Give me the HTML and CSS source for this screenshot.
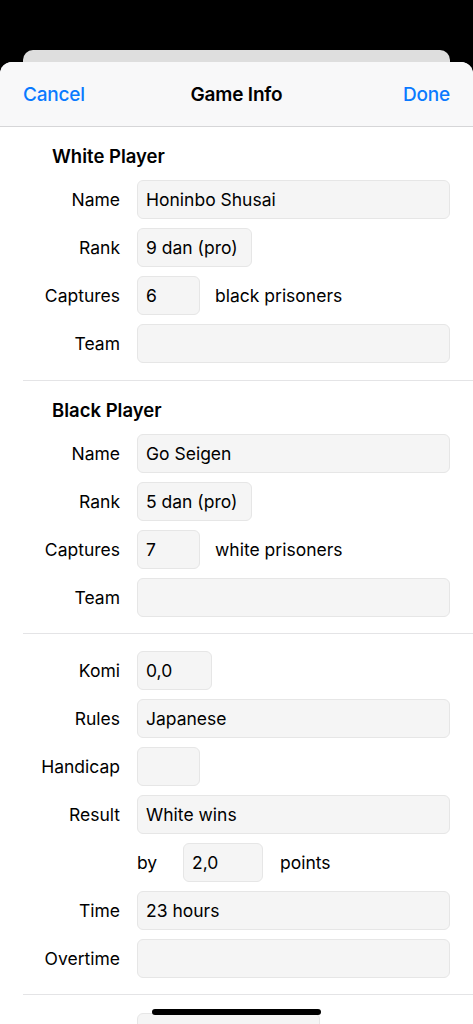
FILE: index.html
```html
<!DOCTYPE html>
<html>
<head>
<meta charset="utf-8">
<link rel="stylesheet" href="styles.css">
</head>
<body>
<div class="screen">
  <div class="backcard"></div>
  <div class="sheet">
    <header class="navbar">
      <span class="nav-btn">Cancel</span>
      <span class="nav-title">Game Info</span>
      <span class="nav-btn done">Done</span>
    </header>
    <main class="content">
      <section class="section first">
        <h2 class="section-title">White Player</h2>
        <div class="form">
          <label class="lbl">Name</label><div class="row"><div class="field wide">Honinbo Shusai</div></div>
          <label class="lbl">Rank</label><div class="row"><div class="field rank">9 dan (pro)</div></div>
          <label class="lbl">Captures</label><div class="row"><div class="field small">6</div><span class="suffix">black prisoners</span></div>
          <label class="lbl">Team</label><div class="row"><div class="field wide"></div></div>
        </div>
      </section>
      <section class="section">
        <h2 class="section-title">Black Player</h2>
        <div class="form">
          <label class="lbl">Name</label><div class="row"><div class="field wide">Go Seigen</div></div>
          <label class="lbl">Rank</label><div class="row"><div class="field rank">5 dan (pro)</div></div>
          <label class="lbl">Captures</label><div class="row"><div class="field small">7</div><span class="suffix">white prisoners</span></div>
          <label class="lbl">Team</label><div class="row"><div class="field wide"></div></div>
        </div>
      </section>
      <section class="section game">
        <div class="form">
          <label class="lbl">Komi</label><div class="row"><div class="field komi">0,0</div></div>
          <label class="lbl">Rules</label><div class="row"><div class="field wide">Japanese</div></div>
          <label class="lbl">Handicap</label><div class="row"><div class="field small"></div></div>
          <label class="lbl">Result</label><div class="row"><div class="field wide">White wins</div></div>
          <span class="lbl"></span><div class="row"><span class="by">by</span><div class="field points">2,0</div><span class="suffix pts">points</span></div>
          <label class="lbl">Time</label><div class="row"><div class="field wide">23 hours</div></div>
          <label class="lbl">Overtime</label><div class="row"><div class="field wide"></div></div>
        </div>
      </section>
      <section class="section">
        <div class="form">
          <span class="lbl"></span><div class="row"><div class="field date">16.10.1933</div></div>
        </div>
      </section>
    </main>
  </div>
  <div class="home-indicator"></div>
</div>
</body>
</html>
```

FILE: styles.css
```css
* { box-sizing: border-box; }
html, body { margin: 0; padding: 0; }
body {
  background: #000;
  font-family: Inter, "Noto Sans", "Liberation Sans", sans-serif;
  color: #000;
}
.screen {
  position: relative;
  width: 473px;
  height: 1024px;
  overflow: hidden;
  background: #000;
  padding-top: 50px;
}
.backcard {
  height: 20px;
  margin: 0 23px -8px;
  background: #dedede;
  border-radius: 10px 10px 0 0;
}
.sheet {
  position: relative;
  background: #fff;
  border-radius: 12px 12px 0 0;
  overflow: hidden;
  height: 962px;
}
.navbar {
  height: 65px;
  background: #f8f8f9;
  border-bottom: 1px solid #d6d6d8;
  display: flex;
  align-items: center;
  justify-content: space-between;
  padding: 0 23px;
  position: relative;
}
.nav-btn {
  color: #0a7aff;
  font-size: 19px;
  font-weight: 500;
  letter-spacing: -0.2px;
}
.nav-title {
  position: absolute;
  left: 0;
  right: 0;
  text-align: center;
  font-size: 19px;
  font-weight: 600;
  letter-spacing: -0.2px;
  pointer-events: none;
}
.section {
  margin-left: 23px;
  padding: 18px 23px 16px 0;
  border-top: 1px solid #e4e4e6;
}
.section.first { border-top: none; padding-top: 18px; padding-bottom: 17px; }
.section.game { padding-top: 17px; }
.section-title {
  margin: 0 0 13px 29px;
  font-size: 18.5px;
  font-weight: 600;
  line-height: 22px;
  letter-spacing: 0;
}
.form {
  display: grid;
  grid-template-columns: 97px 1fr;
  column-gap: 17px;
  row-gap: 9px;
  align-items: center;
}
.lbl {
  text-align: right;
  font-size: 17.5px;
}
.row {
  display: flex;
  align-items: center;
  height: 39px;
}
.field {
  height: 39px;
  background: #f5f5f5;
  border: 1px solid #e6e6e6;
  border-radius: 6px;
  padding: 0 8px;
  display: flex;
  align-items: center;
  font-size: 17.5px;
  white-space: nowrap;
  overflow: hidden;
}
.field.wide { flex: 1; }
.field.rank { width: 115px; }
.field.small { width: 63px; }
.field.komi { width: 75px; }
.field.points { width: 80px; }
.field.date { width: 183px; }
.suffix {
  margin-left: 15px;
  font-size: 17.5px;
}
.suffix.pts { margin-left: 17px; }
.by {
  width: 46px;
  font-size: 17.5px;
}
.home-indicator {
  position: absolute;
  left: 152px;
  top: 1009px;
  width: 169px;
  height: 6px;
  border-radius: 3px;
  background: #000;
}
```
